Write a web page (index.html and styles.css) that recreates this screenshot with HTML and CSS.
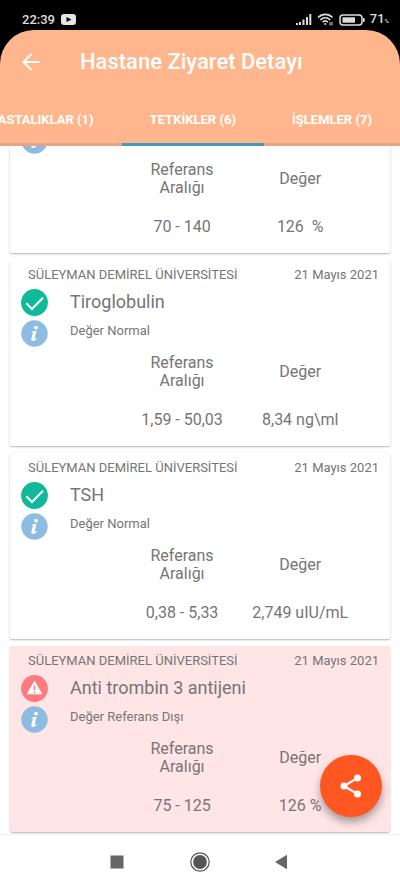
FILE: index.html
```html
<!DOCTYPE html>
<html lang="tr">
<head>
<meta charset="utf-8">
<meta name="viewport" content="width=device-width, initial-scale=1">
<title>Hastane Ziyaret Detayı</title>
<link rel="stylesheet" href="styles.css">
</head>
<body>
<svg class="defs" aria-hidden="true">
  <symbol id="info" viewBox="0 0 27 27">
    <circle cx="13.5" cy="13.5" r="13.2" fill="#8cbce2"/>
    <circle cx="15" cy="7.6" r="1.9" fill="#fff"/>
    <path d="M10.6 11.6l5-.8-2 7.6c-.2.8.3.9 1.8-.7l.6.5c-1.500 2.200-2.900 2.700-4 2.700-1.500 0-2-.9-1.600-2.400l1.400-5.300c.2-.7-.2-.9-1.300-.9z" fill="#fff"/>
  </symbol>
  <symbol id="ok" viewBox="0 0 27 27">
    <circle cx="13.5" cy="13.5" r="13.4" fill="#0fb99a"/>
    <path d="M5.3 14.3l5.7 5.7L22 8.8" fill="none" stroke="#fff" stroke-width="2"/>
  </symbol>
  <symbol id="warn" viewBox="0 0 27 27">
    <circle cx="13.5" cy="13.5" r="13.4" fill="#ff7b7f"/>
    <path d="M13.5 6.6l7.2 12.2H6.3z" fill="#fff" stroke="#fff" stroke-linejoin="round"/>
    <path d="M13.5 10.6v4.6M13.5 16.4v1.7" stroke="#ff7b7f" stroke-width="1.6"/>
  </symbol>
</svg>
<div class="screen">
  <div class="status">
    <div class="status-group">
      <span class="clock">22:39</span>
      <svg width="15" height="11" viewBox="0 0 15 11"><rect width="15" height="11" rx="3" fill="#e6e6e6"/><path d="M5.5 3l5 2.5-5 2.5z" fill="#000"/></svg>
    </div>
    <div class="status-group status-right">
      <svg width="16" height="12" viewBox="0 0 16 12" fill="#ddd"><rect x="0" y="9" width="2" height="2"/><rect x="3" y="8" width="2" height="3"/><rect x="6.500" y="5.500" width="2" height="5.500"/><rect x="10" y="3" width="2" height="8"/><rect x="13.300" y="0" width="2" height="11"/></svg>
      <svg width="17" height="13" viewBox="0 0 17 13" fill="none" stroke="#ddd" stroke-width="1.700"><path d="M1 4.500c4.200-4.200 10.500-4.200 14.500 0M3.300 7c3-2.900 7-2.900 9.900 0M5.600 9.200c1.700-1.600 3.700-1.600 5.300 0"/><circle cx="8.200" cy="11" r="1" fill="#ddd" stroke="none"/><path d="M13 9v3.500M15 9v3.500" stroke-width="1"/></svg>
      <svg width="26" height="12" viewBox="0 0 26 12"><rect x="1" y="1" width="22" height="10" rx="3" fill="none" stroke="#ddd" stroke-width="1.500"/><rect x="3.500" y="3.300" width="12.500" height="5.400" fill="#ddd"/><path d="M24.500 4c1 0 1 4 0 4z" fill="#ddd" stroke="#ddd"/></svg>
      <span class="battery">71<small>%</small></span>
    </div>
  </div>

  <header class="header">
    <div class="bar">
      <button class="back" aria-label="Geri">
        <svg width="18" height="18" viewBox="0 0 18 18" fill="none" stroke="#fff" stroke-width="2"><path d="M17.500 9H2M9.500 1L1.500 9l8 8"/></svg>
      </button>
      <h1>Hastane Ziyaret Detayı</h1>
    </div>
    <nav class="tabs">
      <a class="tab" href="#">HASTALIKLAR (1)</a>
      <a class="tab active" href="#" aria-current="page">TETKİKLER (6)</a>
      <a class="tab" href="#">İŞLEMLER (7)</a>
    </nav>
  </header>

  <main class="list">
    <article class="card">
      <div class="row note"><svg class="mark"><use href="#info"/></svg><p>Değer Normal</p></div>
      <table class="values">
        <tr><th>Referans<br>Aralığı</th><th>Değer</th></tr>
        <tr><td>70 - 140</td><td>126 &nbsp;%</td></tr>
      </table>
    </article>
    <article class="card">
      <div class="meta"><span>SÜLEYMAN DEMİREL ÜNİVERSİTESİ</span><time>21 Mayıs 2021</time></div>
      <div class="row"><svg class="mark"><use href="#ok"/></svg><h2>Tiroglobulin</h2></div>
      <div class="row note"><svg class="mark"><use href="#info"/></svg><p>Değer Normal</p></div>
      <table class="values">
        <tr><th>Referans<br>Aralığı</th><th>Değer</th></tr>
        <tr><td>1,59 - 50,03</td><td>8,34 ng\ml</td></tr>
      </table>
    </article>
    <article class="card">
      <div class="meta"><span>SÜLEYMAN DEMİREL ÜNİVERSİTESİ</span><time>21 Mayıs 2021</time></div>
      <div class="row"><svg class="mark"><use href="#ok"/></svg><h2>TSH</h2></div>
      <div class="row note"><svg class="mark"><use href="#info"/></svg><p>Değer Normal</p></div>
      <table class="values">
        <tr><th>Referans<br>Aralığı</th><th>Değer</th></tr>
        <tr><td>0,38 - 5,33</td><td>2,749 uIU/mL</td></tr>
      </table>
    </article>
    <article class="card alert">
      <div class="meta"><span>SÜLEYMAN DEMİREL ÜNİVERSİTESİ</span><time>21 Mayıs 2021</time></div>
      <div class="row"><svg class="mark"><use href="#warn"/></svg><h2>Anti trombin 3 antijeni</h2></div>
      <div class="row note"><svg class="mark"><use href="#info"/></svg><p>Değer Referans Dışı</p></div>
      <table class="values">
        <tr><th>Referans<br>Aralığı</th><th>Değer</th></tr>
        <tr><td>75 - 125</td><td>126 %</td></tr>
      </table>
    </article>
    <button class="fab" aria-label="Paylaş">
      <svg width="22" height="24" viewBox="0 0 22 24"><path d="M17.500 4L4 12l13.500 8" fill="none" stroke="#fff" stroke-width="2.200"/><g fill="#fff"><circle cx="17.500" cy="4" r="3.500"/><circle cx="4" cy="12" r="3.500"/><circle cx="17.500" cy="20" r="3.500"/></g></svg>
    </button>
  </main>

  <footer class="navbar">
    <button aria-label="Son uygulamalar"><svg width="20" height="20" viewBox="0 0 20 20"><rect x="3.500" y="3.500" width="13" height="13" fill="#666"/></svg></button>
    <button aria-label="Ana ekran"><svg width="20" height="20" viewBox="0 0 20 20"><circle cx="10" cy="10" r="9.200" fill="none" stroke="#555" stroke-width="1.200"/><circle cx="10" cy="10" r="6.900" fill="#555"/></svg></button>
    <button aria-label="Geri dön"><svg width="20" height="20" viewBox="0 0 20 20"><path d="M2 10l12-7.200v14.400z" fill="#666"/></svg></button>
  </footer>
</div>
</body>
</html>
```
FILE: styles.css
```css
* { box-sizing: border-box; }
body {
  margin: 0;
  font-family: Roboto, "Liberation Sans", sans-serif;
  color: #757575;
  background: #fff;
}
h1, h2, p { margin: 0; }
button { padding: 0; border: 0; background: none; display: grid; place-items: center; }
svg { display: block; flex: none; }
.defs { position: absolute; width: 0; height: 0; }

.screen {
  height: 100vh;
  display: flex;
  flex-direction: column;
  background: linear-gradient(#000 80px, #fff 80px);
}

.status {
  height: 30px;
  padding: 9px 11px 0 22px;
  display: flex;
  justify-content: space-between;
  align-items: center;
  color: #ddd;
}
.status-group { display: flex; align-items: center; gap: 6px; }
.status-right { gap: 5px; }
.clock { font-size: 13px; font-weight: 500; line-height: 20px; }
.battery { font-size: 13px; line-height: 20px; font-weight: 500; }
.battery small { font-size: 6px; }

.header {
  background: #ffb68c;
  border-radius: 34px 34px 0 0;
  color: #fff;
}
.bar { height: 64px; padding: 0 22px; display: flex; align-items: center; gap: 40px; }
h1 { font-size: 22px; line-height: 28px; font-weight: 500; }

.tabs {
  height: 52px;
  display: flex;
  justify-content: flex-end;
  overflow: hidden;
}
.tab {
  flex: none;
  padding: 0 28px;
  border-bottom: 3px solid #e3a588;
  color: #fff;
  font-size: 13px;
  font-weight: 700;
  line-height: 52px;
  text-decoration: none;
}
.tab.active { border-color: #419cbb; }

.list {
  flex: 1;
  min-height: 0;
  position: relative;
  overflow: hidden;
  padding: 0 10px 2px;
  display: flex;
  flex-direction: column;
  justify-content: flex-end;
  gap: 7px;
  background: #fff;
}
.card {
  flex: none;
  padding: 4px 11px 12px;
  border-radius: 2px;
  background: #fff;
  box-shadow: 0 1px 2px rgba(0, 0, 0, 0.3);
}
.card.alert { background: #ffe5e6; }
.meta {
  padding-left: 7px;
  display: flex;
  justify-content: space-between;
  font-size: 13px;
  line-height: 22px;
}
.row { height: 32px; display: flex; align-items: center; gap: 22px; }
.row.note { height: 31px; }
.mark { width: 27px; height: 27px; }
h2 { font-size: 18px; line-height: 24px; font-weight: 400; }
p { font-size: 13px; line-height: 20px; padding-bottom: 6px; }

.values {
  width: 66%;
  margin-left: 102px;
  table-layout: fixed;
  border-collapse: collapse;
  font-size: 16px;
  line-height: 18px;
  text-align: center;
}
.values th { height: 46px; padding: 5px 0; font-weight: 400; }
.values td { height: 39px; padding: 16px 0 5px; }

.fab {
  position: absolute;
  right: 18px;
  bottom: 17px;
  width: 62px;
  height: 62px;
  border-radius: 50%;
  background: #ff5722;
  box-shadow: 0 5px 9px rgba(0, 0, 0, 0.35);
}

.navbar {
  height: 54px;
  padding: 0 107px;
  display: flex;
  align-items: center;
  justify-content: space-between;
  border-top: 1px solid #f2f2f2;
  background: #fff;
}
```
